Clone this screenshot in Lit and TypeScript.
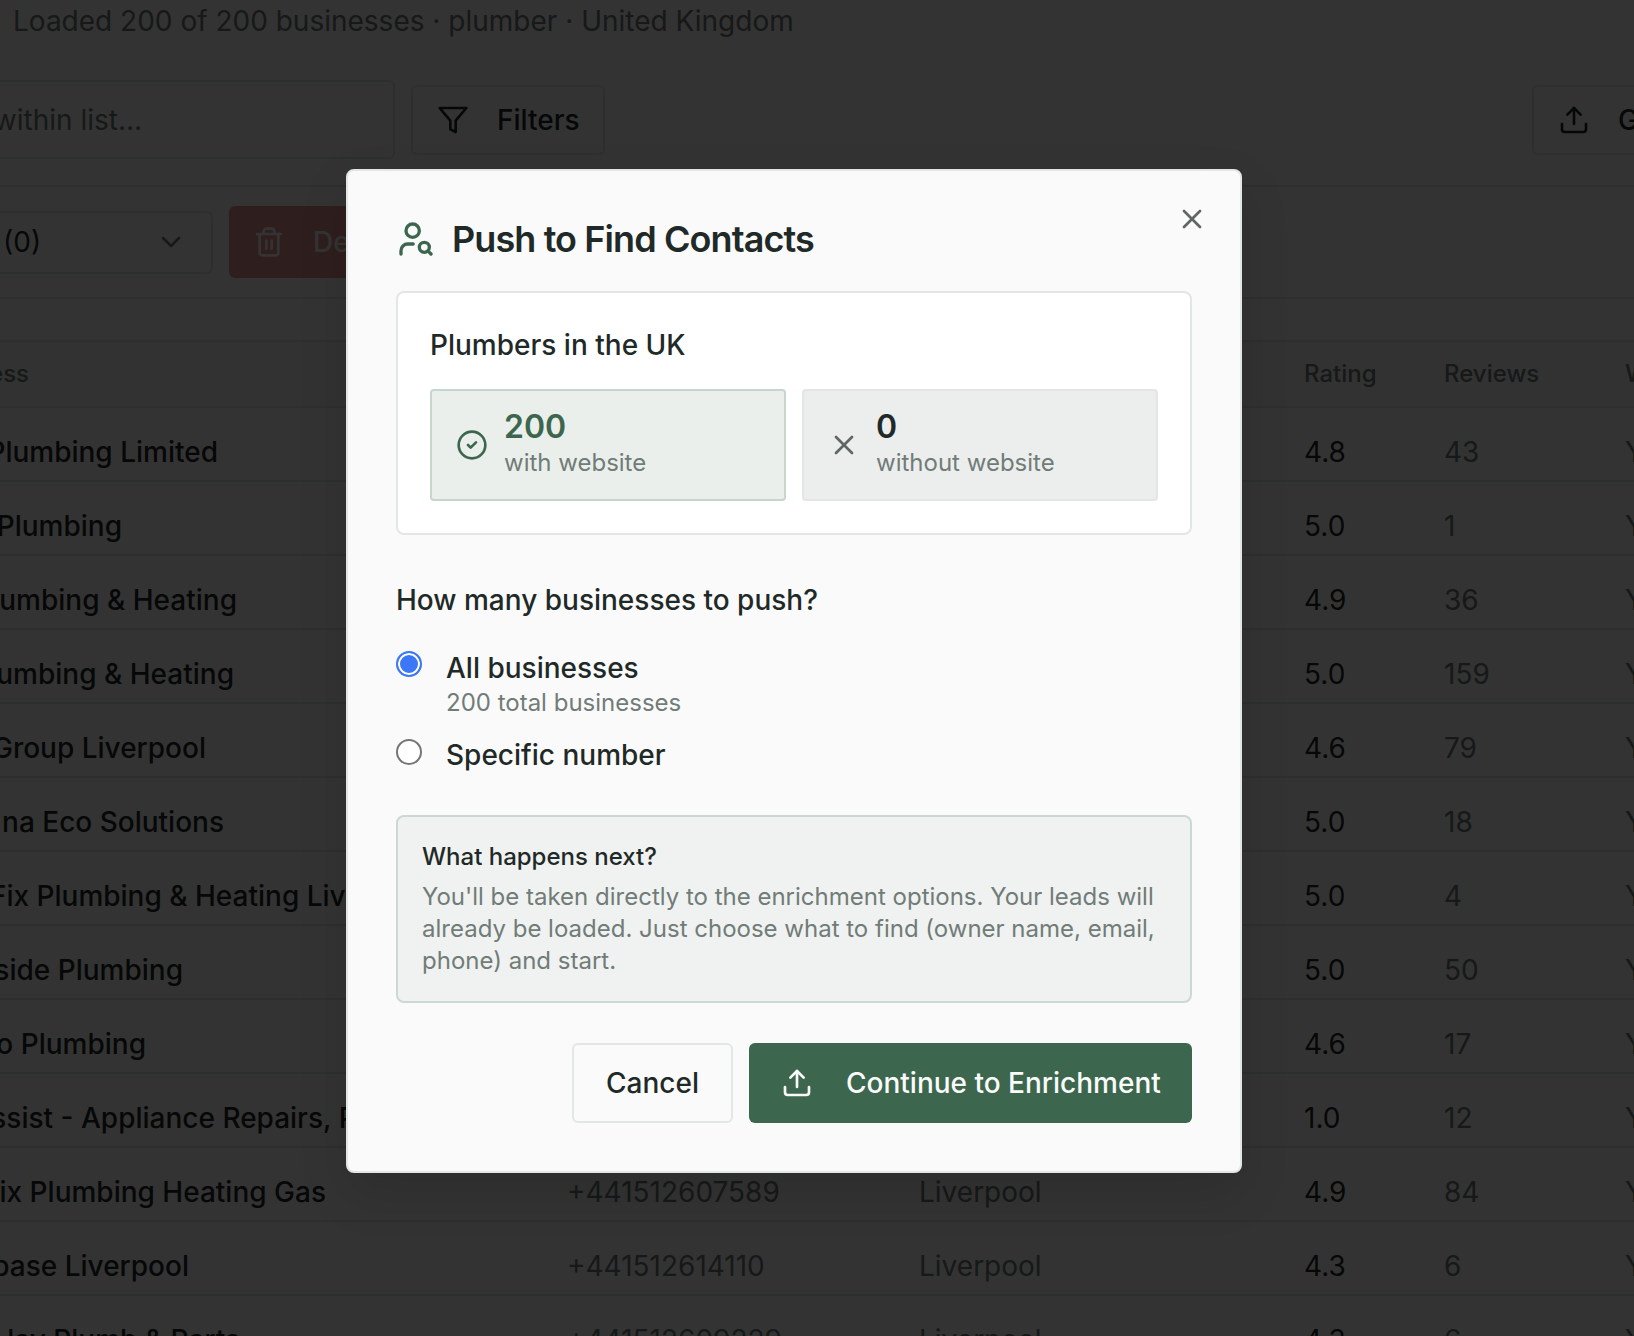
import { LitElement, html, css, svg } from "lit";
import { customElement } from "lit/decorators.js";

type Row = { name: string; end: number; phone: string; city: string; rating: string; reviews: string };

const rows: Row[] = [
  { name: "Plumbing Limited", end: 218, phone: "", city: "", rating: "4.8", reviews: "43" },
  { name: "Plumbing", end: 122, phone: "", city: "", rating: "5.0", reviews: "1" },
  { name: "umbing & Heating", end: 237, phone: "", city: "", rating: "4.9", reviews: "36" },
  { name: "umbing & Heating", end: 234, phone: "", city: "", rating: "5.0", reviews: "159" },
  { name: "Group Liverpool", end: 206, phone: "", city: "", rating: "4.6", reviews: "79" },
  { name: "na Eco Solutions", end: 224, phone: "", city: "", rating: "5.0", reviews: "18" },
  { name: "Fix Plumbing & Heating Liverpool", end: 431, phone: "", city: "", rating: "5.0", reviews: "4" },
  { name: "side Plumbing", end: 183, phone: "", city: "", rating: "5.0", reviews: "50" },
  { name: "o Plumbing", end: 146, phone: "", city: "", rating: "4.6", reviews: "17" },
  { name: "ssist - Appliance Repairs, Plumbing", end: 464, phone: "", city: "", rating: "1.0", reviews: "12" },
  { name: "ix Plumbing Heating Gas", end: 326, phone: "+441512607589", city: "Liverpool", rating: "4.9", reviews: "84" },
  { name: "base Liverpool", end: 189, phone: "+441512614110", city: "Liverpool", rating: "4.3", reviews: "6" },
  { name: "lay Plumb & Parts", end: 240, phone: "+441512609229", city: "Liverpool", rating: "4.3", reviews: "6" },
];

const icon = (size: number, body: unknown) => html`<svg
  class="ic"
  width=${size}
  height=${size}
  viewBox="0 0 24 24"
  fill="none"
  stroke="currentColor"
  stroke-width="2"
  stroke-linecap="round"
  stroke-linejoin="round"
>${body}</svg>`;

const uploadIcon = svg`<path d="M21 15v4a2 2 0 0 1-2 2H5a2 2 0 0 1-2-2v-4"/><polyline points="17 8 12 3 7 8"/><line x1="12" y1="3" x2="12" y2="15"/>`;
const xIcon = svg`<path d="M18 6 6 18"/><path d="m6 6 12 12"/>`;
const filterIcon = svg`<polygon points="22 3 2 3 10 12.46 10 19 14 21 14 12.46 22 3"/>`;
const trashIcon = svg`<path d="M3 6h18"/><path d="M19 6v14c0 1-1 2-2 2H7c-1 0-2-1-2-2V6"/><path d="M8 6V4c0-1 1-2 2-2h4c1 0 2 1 2 2v2"/><line x1="10" y1="11" x2="10" y2="17"/><line x1="14" y1="11" x2="14" y2="17"/>`;
const chevronIcon = svg`<path d="m6 9 6 6 6-6"/>`;
const userSearchIcon = svg`<circle cx="10" cy="7" r="4"/><path d="M10.3 15H7a4 4 0 0 0-4 4v2"/><circle cx="17" cy="17" r="3"/><path d="m21 21-1.9-1.9"/>`;
const checkCircleIcon = svg`<circle cx="12" cy="12" r="10"/><path d="m9 12 2 2 4-4"/>`;

@customElement("app-root")
export class AppRoot extends LitElement {
  static styles = css`
    :host {
      display: block;
      position: relative;
      width: 1634px;
      height: 1336px;
      overflow: hidden;
      background: #fff;
      font-family: Inter, "Liberation Sans", sans-serif;
      color: #1f2a28;
      --muted: #717c78;
      --line: #e2e6e4;
    }
    * { box-sizing: border-box; }
    .ic { display: block; flex: none; }
    .page { font-size: 28px; line-height: 40px; }
    .status { padding: 1px 0 0 13px; color: var(--muted); }
    .tools {
      display: flex;
      align-items: center;
      margin: 39px -165px 0 -130px;
      height: 79px;
      gap: 16px;
    }
    .search {
      width: 525px;
      height: 79px;
      border: 2px solid var(--line);
      border-radius: 6px;
      color: var(--muted);
      display: flex;
      align-items: center;
      padding-left: 21px;
    }
    .btn {
      height: 70px;
      border: 2px solid var(--line);
      border-radius: 6px;
      display: flex;
      align-items: center;
      font-weight: 500;
      white-space: nowrap;
    }
    .filters { width: 194px; padding-left: 24px; gap: 28px; }
    .spacer { flex: 1; }
    .go { width: 267px; padding-left: 24px; gap: 28px; }
    .rule1 { height: 2px; background: var(--line); margin-top: 26px; }
    .actions {
      height: 112px;
      display: flex;
      align-items: center;
      margin-left: -100px;
      gap: 16px;
      border-bottom: 2px solid var(--line);
    }
    .select {
      width: 313px;
      height: 63px;
      border: 2px solid var(--line);
      border-radius: 6px;
      display: flex;
      align-items: center;
      justify-content: space-between;
      padding: 0 24px 0 101px;
      color: #1f2a28;
    }
    .select .ic { color: var(--muted); }
    .del {
      width: 300px;
      height: 72px;
      border-radius: 6px;
      background: #eb9696;
      color: #fff;
      display: flex;
      align-items: center;
      gap: 28px;
      padding-left: 24px;
      font-weight: 500;
    }
    .band { height: 43px; border-bottom: 2px solid var(--line); }
    .head, .row {
      display: grid;
      grid-template-columns: 567px 352px 385px 140px 181px 100px;
      white-space: nowrap;
    }
    .head {
      height: 66px;
      padding-top: 16px;
      font-size: 24px;
      line-height: 32px;
      font-weight: 500;
      color: var(--muted);
      border-bottom: 2px solid var(--line);
      background: #f7f8f8;
    }
    .row {
      height: 74px;
      padding-top: 24px;
      border-bottom: 2px solid var(--line);
      color: var(--muted);
    }
    .name {
      display: flex;
      justify-content: flex-end;
      font-weight: 500;
      color: #1f2a28;
    }
    .rating { color: #1f2a28; }
    .head-first { display: flex; justify-content: flex-end; width: 29px; }

    .overlay {
      position: absolute;
      inset: 0;
      background: rgba(0, 0, 0, 0.8);
      display: flex;
      justify-content: flex-start;
      align-items: flex-start;
      padding: 169px 0 0 346px;
    }
    .modal {
      position: relative;
      width: 896px;
      height: 1004px;
      background: #fafafa;
      border: 2px solid var(--line);
      border-radius: 8px;
      padding: 48px;
      box-shadow: 0 20px 50px rgba(0, 0, 0, 0.12);
      font-size: 28px;
      line-height: 40px;
    }
    .close {
      position: absolute;
      top: 32px;
      right: 32px;
      color: #5f6664;
    }
    .title {
      display: flex;
      align-items: center;
      gap: 16px;
      height: 40px;
      font-size: 36px;
      line-height: 40px;
      font-weight: 600;
    }
    .title .ic { color: #3c674e; }
    .title span { letter-spacing: -0.9px; }
    .card {
      margin-top: 32px;
      height: 244px;
      background: #fff;
      border: 2px solid var(--line);
      border-radius: 8px;
      padding: 32px;
    }
    .card-title { font-weight: 500; }
    .stats { display: grid; grid-template-columns: 1fr 1fr; gap: 16px; margin-top: 24px; }
    .stat {
      height: 112px;
      border: 2px solid var(--line);
      border-radius: 4px;
      background: #eceeed;
      display: flex;
      align-items: center;
      gap: 16px;
      padding: 0 24px;
      color: #5f6664;
    }
    .stat.good { background: #eaefeb; border-color: #c7d6cd; color: #3c674e; }
    .stat-text { padding-bottom: 4px; }
    .num { font-size: 32px; line-height: 40px; font-weight: 600; color: #1f2a28; }
    .good .num { color: #3c674e; }
    .cap { font-size: 24px; line-height: 32px; color: var(--muted); }
    .question { margin-top: 45px; font-weight: 500; }
    .opts { margin-top: 28px; display: flex; flex-direction: column; gap: 16px; }
    .opt { display: flex; gap: 24px; }
    .radio {
      flex: none;
      width: 26px;
      height: 26px;
      margin-top: 4px;
      border-radius: 50%;
      border: 2px solid #767676;
      background: #fff;
    }
    .radio.on {
      margin-top: 3px;
      border-color: #3b77f7;
      background: #3b77f7;
      box-shadow: inset 0 0 0 2px #fff;
    }
    .opt-label { font-weight: 500; }
    .opt-sub { margin-top: -1px; font-size: 24px; line-height: 32px; color: var(--muted); }
    .next {
      margin-top: 40px;
      height: 188px;
      background: #eff2f0;
      border: 2px solid #cbd9d3;
      border-radius: 8px;
      padding: 24px 24px;
      font-size: 24px;
      line-height: 32px;
      color: var(--muted);
    }
    .next-title { font-weight: 500; color: #1f2a28; margin-bottom: 8px; }
    .foot { margin-top: 40px; display: flex; justify-content: flex-end; gap: 16px; }
    .foot .b {
      height: 80px;
      border-radius: 6px;
      display: flex;
      align-items: center;
      font-weight: 500;
    }
    .cancel { width: 161px; justify-content: center; border: 2px solid var(--line); }
    .cont { width: 443px; background: #3c674e; color: #fafafa; padding-left: 32px; gap: 33px; }
  `;

  render() {
    return html`
      <div class="page">
        <div class="status">Loaded 200 of 200 businesses · plumber · United Kingdom</div>
        <div class="tools">
          <div class="search">Search within list...</div>
          <div class="btn filters">${icon(32, filterIcon)}Filters</div>
          <div class="spacer"></div>
          <div class="btn go">${icon(32, uploadIcon)}Get Contacts</div>
        </div>
        <div class="rule1"></div>
        <div class="actions">
          <div class="select">(0)${icon(32, chevronIcon)}</div>
          <div class="del">${icon(32, trashIcon)}Delete</div>
        </div>
        <div class="band"></div>
        <div class="head">
          <div class="head-first">ess</div>
          <div></div>
          <div></div>
          <div>Rating</div>
          <div>Reviews</div>
          <div>Website</div>
        </div>
        ${rows.map(
          (r) => html`<div class="row">
            <div><div class="name" style="width:${r.end}px">${r.name}</div></div>
            <div>${r.phone}</div>
            <div>${r.city}</div>
            <div class="rating">${r.rating}</div>
            <div>${r.reviews}</div>
            <div>Yes</div>
          </div>`
        )}
      </div>
      <div class="overlay">
        <div class="modal">
          <div class="close">${icon(32, xIcon)}</div>
          <div class="title">${icon(40, userSearchIcon)}<span>Push to Find Contacts</span></div>
          <div class="card">
            <div class="card-title">Plumbers in the UK</div>
            <div class="stats">
              <div class="stat good">
                ${icon(32, checkCircleIcon)}
                <div class="stat-text"><div class="num">200</div><div class="cap">with website</div></div>
              </div>
              <div class="stat">
                ${icon(32, xIcon)}
                <div class="stat-text"><div class="num">0</div><div class="cap">without website</div></div>
              </div>
            </div>
          </div>
          <div class="question">How many businesses to push?</div>
          <div class="opts">
            <div class="opt">
              <div class="radio on"></div>
              <div><div class="opt-label">All businesses</div><div class="opt-sub">200 total businesses</div></div>
            </div>
            <div class="opt">
              <div class="radio"></div>
              <div class="opt-label">Specific number</div>
            </div>
          </div>
          <div class="next">
            <div class="next-title">What happens next?</div>
            You'll be taken directly to the enrichment options. Your leads will already be loaded. Just choose what to find (owner name, email, phone) and start.
          </div>
          <div class="foot">
            <div class="b cancel">Cancel</div>
            <div class="b cont">${icon(32, uploadIcon)}Continue to Enrichment</div>
          </div>
        </div>
      </div>
    `;
  }
}
